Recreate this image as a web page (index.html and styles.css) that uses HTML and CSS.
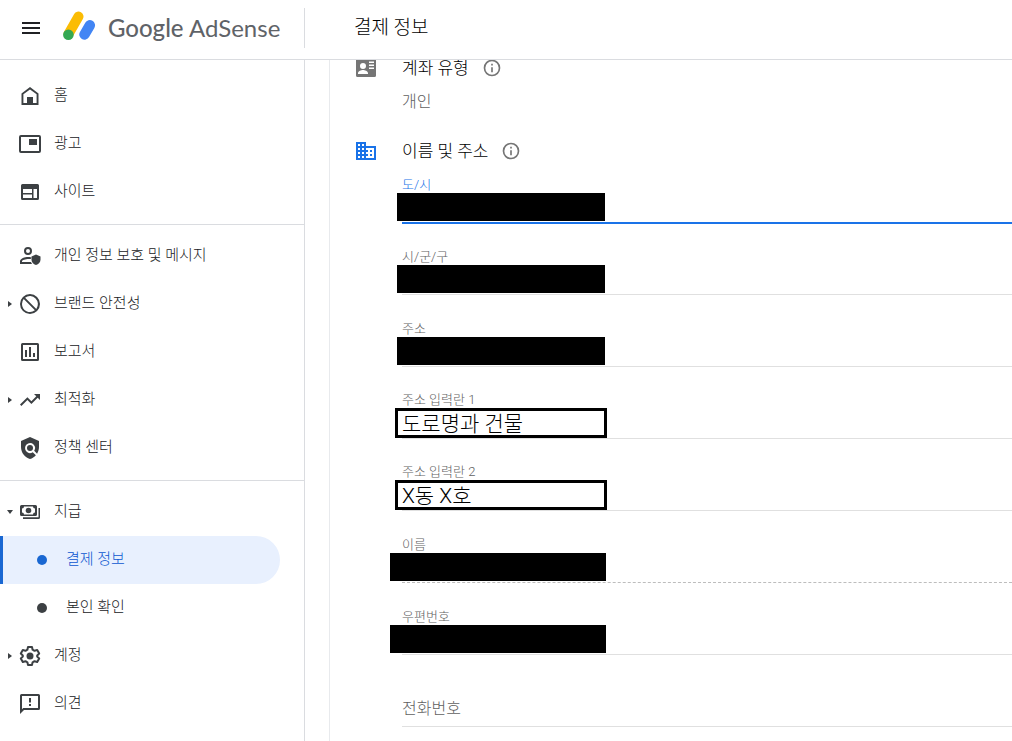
FILE: index.html
```html
<!DOCTYPE html>
<html lang="ko">
<head>
    <meta charset="UTF-8">
    <meta name="viewport" content="width=device-width, initial-scale=1.0">
    <title>결제 정보 - Google AdSense</title>
    <link rel="stylesheet" href="styles.css">
</head>
<body>
    <header class="topbar">
        <div class="brand">
            <button class="menu-btn" type="button" aria-label="메뉴">
                <svg class="icon" viewBox="0 0 24 24"><path d="M3 6h18v2H3zM3 11h18v2H3zM3 16h18v2H3z"/></svg>
            </button>
            <a class="logo" href="#">
                <svg class="logo-mark" viewBox="0 0 34 30" aria-hidden="true">
                    <path d="M16.500 5.500L6.500 23" stroke="#fbbc04" stroke-width="10" stroke-linecap="round"/>
                    <path d="M27.800 14.300L22.500 23.500" stroke="#4285f4" stroke-width="10.500" stroke-linecap="round"/>
                    <circle cx="6.400" cy="23.700" r="5.300" fill="#34a853"/>
                </svg>
                <span class="logo-text"><b>Google</b> AdSense</span>
            </a>
        </div>
        <h1>결제 정보</h1>
    </header>

    <div class="layout">
        <nav class="sidebar">
            <ul>
                <li><a class="item" href="#">
                    <svg class="icon" viewBox="0 0 24 24"><path fill-rule="evenodd" d="M12 3l8.500 6.400V21h-17V9.400zM12 5.400L5.400 10.300V19.100H9V13h6v6.100h3.600v-8.800z"/></svg>
                    <span>홈</span></a></li>
                <li><a class="item" href="#">
                    <svg class="icon" viewBox="0 0 24 24"><path fill-rule="evenodd" d="M3 3h18a2 2 0 0 1 2 2v14a2 2 0 0 1-2 2H3a2 2 0 0 1-2-2V5a2 2 0 0 1 2-2zM3 5v14h18V5zM11 7h8v6h-8z"/></svg>
                    <span>광고</span></a></li>
                <li><a class="item" href="#">
                    <svg class="icon" viewBox="0 0 24 24"><path fill-rule="evenodd" d="M4.500 4h15A1.500 1.500 0 0 1 21 5.500v13a1.500 1.500 0 0 1-1.500 1.500h-15A1.500 1.500 0 0 1 3 18.500v-13A1.500 1.500 0 0 1 4.500 4zM5 9v4h9V9zM5 14.500V18h9v-3.500zM15.500 9v9H19V9z"/></svg>
                    <span>사이트</span></a></li>
            </ul>
            <ul>
                <li><a class="item" href="#">
                    <svg class="icon" viewBox="0 0 24 24"><path fill-rule="evenodd" d="M10 3a4 4 0 1 1 0 8 4 4 0 0 1 0-8zm0 2a2 2 0 1 0 0 4 2 2 0 0 0 0-4zM2 20v-2.800C2 14.500 7 13 10 13c1 0 2.200.1 3.300.4l-.6 1.700C8.800 14.500 4 16 4 17.200v.8h9c.2.700.6 1.400 1.100 2zM18 10.500l4.500 2v3.200c0 2.500-1.900 4.600-4.500 5.300-2.600-.7-4.500-2.800-4.500-5.300v-3.200z"/></svg>
                    <span>개인 정보 보호 및 메시지</span></a></li>
                <li><a class="item expand" href="#">
                    <svg class="icon" viewBox="0 0 24 24"><path d="M12 2a10 10 0 1 0 0 20 10 10 0 0 0 0-20zM4 12a8 8 0 0 1 1.700-4.900L16.900 18.300A8 8 0 0 1 4 12zm14.300 4.900L7.100 5.700A8 8 0 0 1 18.300 16.900z"/></svg>
                    <span>브랜드 안전성</span></a></li>
                <li><a class="item" href="#">
                    <svg class="icon" viewBox="0 0 24 24"><path fill-rule="evenodd" d="M4.500 3h15A1.500 1.500 0 0 1 21 4.500v15a1.500 1.500 0 0 1-1.500 1.500h-15A1.500 1.500 0 0 1 3 19.500v-15A1.500 1.500 0 0 1 4.500 3zM5 5v14h14V5zM7 10h2v7H7zM11 7h2v10h-2zM15 13h2v4h-2z"/></svg>
                    <span>보고서</span></a></li>
                <li><a class="item expand" href="#">
                    <svg class="icon" viewBox="0 0 24 24"><path d="M16 6l2.300 2.300-4.900 4.900-4-4L2 16.600 3.400 18l6-6 4 4 6.300-6.300L22 12V6z"/></svg>
                    <span>최적화</span></a></li>
                <li><a class="item" href="#">
                    <svg class="icon" viewBox="0 0 24 24"><path d="M21 5l-9-4-9 4v6c0 5.550 3.840 10.740 9 12 2.300-.56 4.330-1.900 5.880-3.710l-3.120-3.120a5 5 0 0 1-6.290-.64 5 5 0 0 1 7.070-7.070 5 5 0 0 1 .64 6.290l2.900 2.900C20.290 15.690 21 13.380 21 11z"/><circle cx="12" cy="12" r="3"/></svg>
                    <span>정책 센터</span></a></li>
            </ul>
            <ul>
                <li><a class="item expand open" href="#">
                    <svg class="icon" viewBox="0 0 24 24"><path fill-rule="evenodd" d="M3.500 5h14A1.500 1.500 0 0 1 19 6.500v8a1.500 1.500 0 0 1-1.500 1.500h-14A1.500 1.500 0 0 1 2 14.500v-8A1.500 1.500 0 0 1 3.500 5zM6 6.500A2 2 0 0 1 4 8.500v4a2 2 0 0 1 2 2h9a2 2 0 0 1 2-2v-4a2 2 0 0 1-2-2zM20.500 8H22v9.500a1.500 1.500 0 0 1-1.500 1.500H5v-1.700h15.500z"/><circle cx="10.500" cy="10.500" r="2.800"/></svg>
                    <span>지급</span></a>
                    <ul class="submenu">
                        <li><a class="item sub active" href="#" aria-current="page"><span>결제 정보</span></a></li>
                        <li><a class="item sub" href="#"><span>본인 확인</span></a></li>
                    </ul>
                </li>
                <li><a class="item expand" href="#">
                    <svg class="icon" viewBox="0 0 24 24"><path d="M10 3h4l.6 2.700 1.900 1.100L19.200 6l2 3.500-2 1.900v1.200l2 1.900-2 3.500-2.700-.8-1.900 1.100L14 21h-4l-.6-2.700-1.900-1.100-2.700.8-2-3.500 2-1.900v-1.200l-2-1.900 2-3.500 2.700.8 1.900-1.100z" fill="none" stroke="currentColor" stroke-width="2" stroke-linejoin="round"/><circle cx="12" cy="12" r="3.500"/></svg>
                    <span>계정</span></a></li>
                <li><a class="item" href="#">
                    <svg class="icon" viewBox="0 0 24 24"><path fill-rule="evenodd" d="M3.500 2h17A1.500 1.500 0 0 1 22 3.500v13a1.500 1.500 0 0 1-1.500 1.500H6l-4 4V3.500A1.500 1.500 0 0 1 3.500 2zM4 4v13.200l1.200-1.200H20V4zM11 6h2v4.500h-2zM11 12h2v2h-2z"/></svg>
                    <span>의견</span></a></li>
            </ul>
        </nav>

        <main class="content">
            <section class="panel">
                <div class="section-title">
                    <svg class="icon muted" viewBox="0 0 24 24"><path fill-rule="evenodd" d="M3.500 3h17A1.500 1.500 0 0 1 22 4.500v15a1.500 1.500 0 0 1-1.500 1.500h-17A1.500 1.500 0 0 1 2 19.500v-15A1.500 1.500 0 0 1 3.500 3zM9 7a3 3 0 1 0 0 6 3 3 0 0 0 0-6zM4 18h10v-1c0-2-3.300-3.100-5-3.100S4 15 4 17zM15 5.500v1.500h5V5.500zM15 8.500v1.500h5V8.500zM15 11.500V13h5v-1.500z"/></svg>
                    <h2>계좌 유형</h2>
                    <svg class="info" viewBox="0 0 24 24"><path d="M11 7h2v2h-2zm0 4h2v6h-2zm1-9a10 10 0 1 0 0 20 10 10 0 0 0 0-20zm0 18a8 8 0 1 1 0-16 8 8 0 0 1 0 16z"/></svg>
                </div>
                <p class="value">개인</p>

                <div class="section-title">
                    <svg class="icon blue" viewBox="0 0 24 24"><path d="M12 7V3H2v18h20V7zM6 19H4v-2h2zm0-4H4v-2h2zm0-4H4V9h2zm0-4H4V5h2zm4 12H8v-2h2zm0-4H8v-2h2zm0-4H8V9h2zm0-4H8V5h2zm10 12h-8v-2h2v-2h-2v-2h2v-2h-2V9h8zm-2-8h-2v2h2zm0 4h-2v2h2z"/></svg>
                    <h2>이름 및 주소</h2>
                    <svg class="info" viewBox="0 0 24 24"><path d="M11 7h2v2h-2zm0 4h2v6h-2zm1-9a10 10 0 1 0 0 20 10 10 0 0 0 0-20zm0 18a8 8 0 1 1 0-16 8 8 0 0 1 0 16z"/></svg>
                </div>

                <form class="fields">
                    <div class="field focused">
                        <label for="state">도/시</label>
                        <input class="masked" id="state" type="text">
                    </div>
                    <div class="field">
                        <label for="city">시/군/구</label>
                        <input class="masked" id="city" type="text">
                    </div>
                    <div class="field">
                        <label for="address">주소</label>
                        <input class="masked" id="address" type="text">
                    </div>
                    <div class="field">
                        <label for="line1">주소 입력란 1</label>
                        <input class="boxed" id="line1" type="text" value="도로명과 건물">
                    </div>
                    <div class="field">
                        <label for="line2">주소 입력란 2</label>
                        <input class="boxed" id="line2" type="text" value="X동 X호">
                    </div>
                    <div class="field dashed">
                        <label for="name">이름</label>
                        <input class="masked wide" id="name" type="text" readonly>
                    </div>
                    <div class="field">
                        <label for="zip">우편번호</label>
                        <input class="masked wide" id="zip" type="text">
                    </div>
                    <div class="field">
                        <input class="empty" type="tel" placeholder="전화번호" aria-label="전화번호">
                    </div>
                </form>
            </section>
        </main>
    </div>
</body>
</html>
```

FILE: styles.css
```css
* {
    margin: 0;
    padding: 0;
    box-sizing: border-box;
}

body {
    display: flex;
    flex-direction: column;
    height: 100vh;
    overflow: hidden;
    background: #fff;
    color: #3c4043;
    font-family: Roboto, "Noto Sans CJK KR", sans-serif;
    font-size: 15px;
    font-weight: 300;
}

ul {
    list-style: none;
}

a {
    color: inherit;
    text-decoration: none;
}

.icon {
    flex: none;
    width: 24px;
    height: 24px;
    fill: currentColor;
}

/* top bar */
.topbar {
    display: flex;
    flex: none;
    align-items: center;
    height: 60px;
    padding-bottom: 3px;
    border-bottom: 1px solid #dadce0;
}

.brand {
    display: flex;
    flex: none;
    align-items: center;
    width: 305px;
    height: 40px;
    padding-left: 19px;
    border-right: 1px solid #dadce0;
}

.menu-btn {
    height: 24px;
    border: none;
    background: none;
    color: #202124;
    cursor: pointer;
}

.logo {
    display: flex;
    align-items: center;
    margin-left: 19px;
}

.logo-mark {
    width: 34px;
    height: 30px;
    margin-bottom: 4px;
    fill: none;
}

.logo-text {
    margin-left: 12px;
    color: #5f6368;
    font-family: Lato, sans-serif;
    font-size: 24px;
    font-weight: 400;
    line-height: 30px;
    white-space: nowrap;
}

.logo-text b {
    font-weight: 500;
}

h1 {
    margin-left: 49px;
    color: #000;
    font-size: 19px;
    font-weight: 300;
    line-height: 24px;
}

.layout {
    display: flex;
    flex: 1;
    min-height: 0;
}

/* sidebar */
.sidebar {
    flex: none;
    width: 305px;
    padding-top: 12px;
    border-right: 1px solid #dadce0;
}

.sidebar > ul + ul {
    margin-top: 8px;
    padding-top: 7px;
    border-top: 1px solid #dadce0;
}

.item {
    position: relative;
    display: flex;
    align-items: center;
    gap: 12px;
    height: 48px;
    padding-left: 18px;
}

.item span {
    padding-bottom: 3px;
    color: #202124;
    line-height: 20px;
}

.expand::before {
    content: "";
    position: absolute;
    left: 8px;
    border: 3px solid transparent;
    border-left: 4px solid #3c4043;
    border-right: none;
}

.expand.open::before {
    left: 7px;
    border: 3px solid transparent;
    border-top: 4px solid #3c4043;
    border-bottom: none;
}

.sub {
    gap: 19px;
    margin-right: 24px;
    padding-left: 37px;
}

.sub::before {
    content: "";
    width: 10px;
    height: 10px;
    border-radius: 50%;
    background: currentColor;
}

.active {
    padding-left: 34px;
    border-left: 3px solid #1967d2;
    border-radius: 0 24px 24px 0;
    background: #e8f0fe;
    color: #1967d2;
}

.active span {
    color: #0b57d0;
}

/* content */
.content {
    display: flex;
    flex: 1;
    min-width: 0;
    padding-left: 24px;
    overflow: hidden;
}

.panel {
    flex: 1;
    min-width: 0;
    margin-top: -4px;
    padding-left: 24px;
    border-left: 1px solid #e8eaed;
}

.section-title {
    display: flex;
    align-items: center;
    height: 24px;
}

.section-title h2 {
    margin: 0 13px 0 24px;
    color: #000;
    font-size: 17px;
    font-weight: 300;
    line-height: 16px;
}

.info {
    width: 20px;
    height: 20px;
    fill: #757575;
}

.muted {
    color: #757575;
}

.blue {
    color: #1a73e8;
}

.value {
    margin: 10px 0 25px 48px;
    color: #616161;
    font-size: 16px;
    line-height: 24px;
}

.fields {
    display: flex;
    flex-direction: column;
    gap: 26px;
    padding: 14px 0 0 48px;
}

.field {
    display: flex;
    flex-direction: column;
    justify-content: flex-end;
    height: 46px;
    padding-bottom: 1px;
    border-bottom: 1px solid #e0e0e0;
}

.field label {
    color: #616161;
    font-size: 13px;
    line-height: 16px;
}

.field input {
    flex: none;
    height: 28px;
    border: none;
    border-radius: 0;
    outline: none;
    background: #fff;
    color: #000;
    font-family: inherit;
    font-weight: 300;
}

.focused {
    height: 47px;
    margin-bottom: -1px;
    border-bottom: 2px solid #1a73e8;
}

.focused label {
    color: #1a73e8;
}

.dashed {
    border-bottom: 1px dashed #bdbdbd;
}

.field .masked {
    width: 208px;
    margin-left: -5px;
    background: #000;
}

.field .wide {
    width: 216px;
    margin-left: -12px;
}

.field .boxed {
    width: 212px;
    height: 30px;
    margin: 0 0 -1px -7px;
    padding: 0 0 2px 4px;
    border: 3px solid #000;
    font-size: 21px;
}

.field .empty {
    height: 34px;
    font-size: 16px;
}

.empty::placeholder {
    color: #616161;
}
```
